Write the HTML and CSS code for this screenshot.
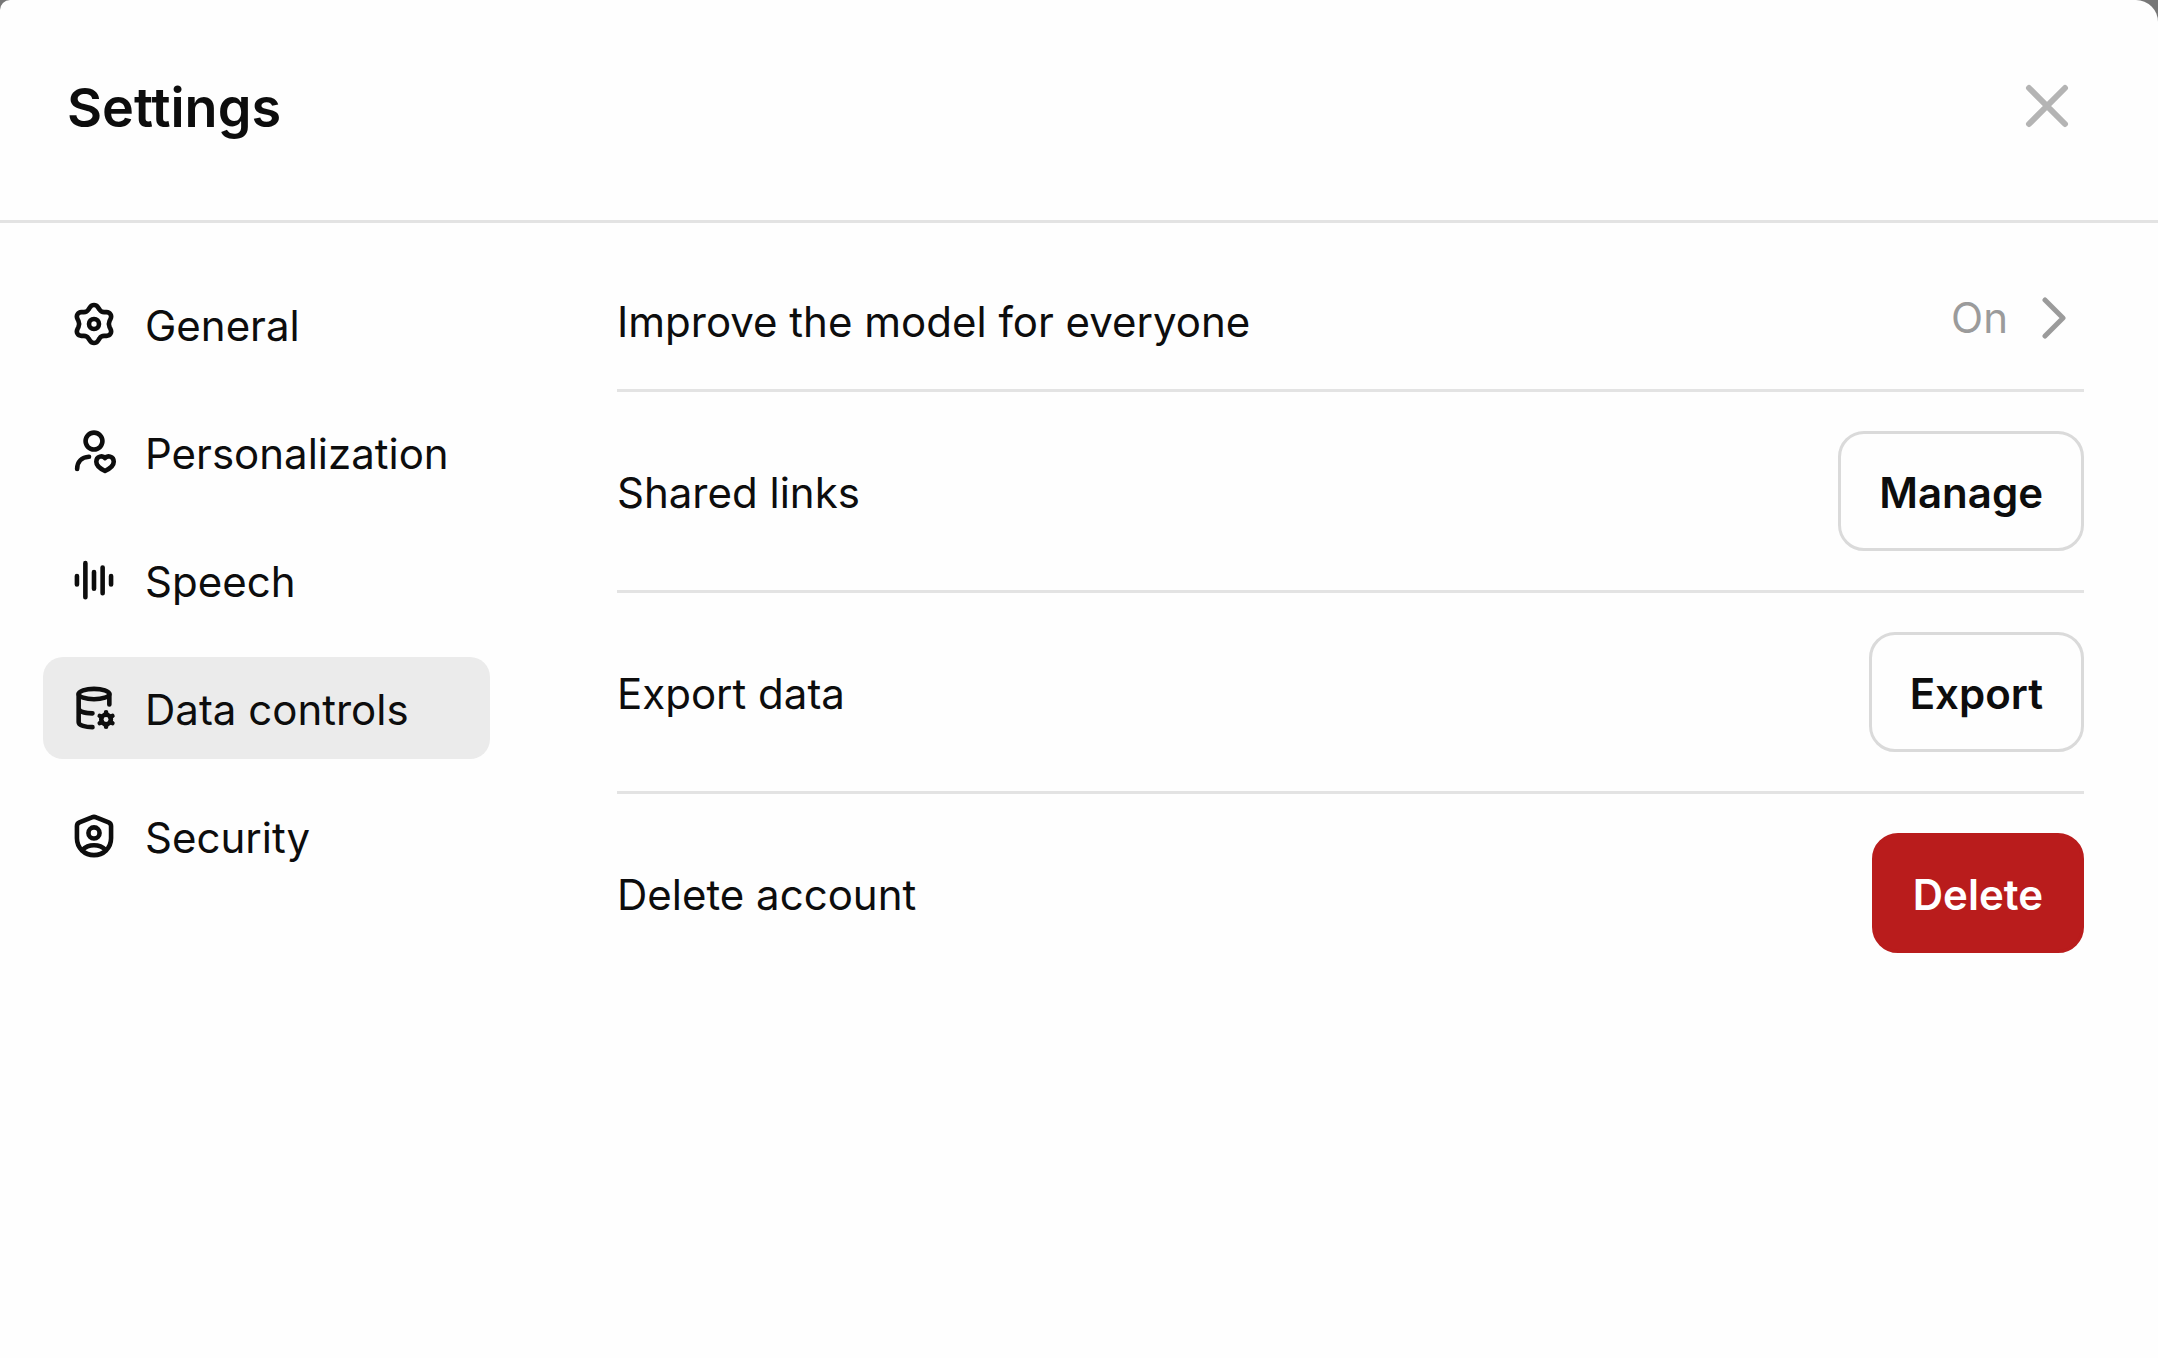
FILE: index.html
```
<!DOCTYPE html>
<html lang="en">
<head>
  <meta charset="UTF-8" />
  <meta name="viewport" content="width=device-width, initial-scale=1.0" />
  <title>Settings</title>
  <link rel="stylesheet" href="styles.css">
</head>
<body>
  <div class="modal" role="dialog" aria-labelledby="title">
    <header class="header">
      <h1 class="title" id="title">Settings</h1>
      <button class="close" aria-label="Close">
        <svg class="icon" viewBox="0 0 46 46"><path d="M5 5L41 41M41 5L5 41" /></svg>
      </button>
    </header>

    <div class="content">
      <nav class="sidebar">
        <button class="tab">
          <svg class="icon" viewBox="0 0 24 24">
            <path d="M9.9 3.3C11 1.7 13 1.7 14.1 3.3L14.9 4.5C15.5 5.5 16.1 5.8 17.3 5.8L18.5 5.8C20.5 5.9 21.5 7.6 20.6 9.4L20.1 10.4C19.6 11.5 19.6 12.5 20.1 13.6L20.6 14.6C21.5 16.4 20.5 18.1 18.5 18.2L17.3 18.2C16.1 18.2 15.5 18.5 14.9 19.5L14.1 20.7C13 22.3 11 22.3 9.9 20.7L9.1 19.5C8.5 18.5 7.9 18.2 6.7 18.2L5.5 18.2C3.5 18.1 2.5 16.4 3.4 14.6L3.9 13.6C4.4 12.5 4.4 11.5 3.9 10.4L3.4 9.4C2.5 7.6 3.5 5.9 5.5 5.8L6.7 5.8C7.9 5.8 8.5 5.5 9.1 4.5Z" />
            <circle cx="12" cy="12" r="2.6" />
          </svg>
          <span class="label">General</span>
        </button>
        <button class="tab">
          <svg class="icon" viewBox="0 0 24 24">
            <circle cx="12" cy="6.3" r="4.4" />
            <path d="M9.4 14.5C5.6 14.7 3.2 17 3.2 20.9" />
            <path d="M17.75 15.2C16.6 13.7 13.2 14 13.2 17.1C13.2 19.2 15.4 20.8 17.75 21.9C20.1 20.8 22.3 19.2 22.3 17.1C22.3 14 18.9 13.7 17.75 15.2Z" />
          </svg>
          <span class="label">Personalization</span>
        </button>
        <button class="tab">
          <svg class="icon" viewBox="0 0 24 24">
            <path d="M3.1 9.9V14.3M7.5 3.2V21M12 7.8V16.6M16.5 5.5V18.9M20.9 9.9V14.3" />
          </svg>
          <span class="label">Speech</span>
        </button>
        <button class="tab active">
          <svg class="icon" viewBox="0 0 24 24">
            <ellipse cx="12" cy="4.7" rx="8" ry="2.7" />
            <path d="M4 4.7V19.4C4 21 7.6 22 11.2 22M4 12.4C4.4 14 7.8 14.8 11.2 14.8M20 4.7V10.2" />
            <circle cx="18.3" cy="18" r="2.5" />
            <path d="M18.3 15.4V14.2M18.3 20.6V21.8M20.6 16.7L21.6 16.1M16 19.3L15 19.9M20.6 19.3L21.6 19.9M16 16.7L15 16.1" />
          </svg>
          <span class="label">Data controls</span>
        </button>
        <button class="tab">
          <svg class="icon" viewBox="0 0 24 24">
            <path d="M10.9 2.3Q12 1.8 13.1 2.3L19.6 4.9Q20.9 5.5 20.9 6.8V13.2C20.9 18.4 16.8 22 12 22S3.1 18.4 3.1 13.2V6.8Q3.1 5.5 4.4 4.9Z" />
            <circle cx="12" cy="10.4" r="2.9" />
            <path d="M6 19.2C7.5 17.6 9.6 16.8 12 16.8S16.5 17.6 18 19.2" />
          </svg>
          <span class="label">Security</span>
        </button>
      </nav>

      <main class="panel">
        <div class="row">
          <span class="label">Improve the model for everyone</span>
          <button class="value">
            On
            <svg class="chevron" viewBox="0 0 24 46"><path d="M3 5L21 23L3 41" /></svg>
          </button>
        </div>
        <div class="row">
          <span class="label">Shared links</span>
          <button class="btn">Manage</button>
        </div>
        <div class="row">
          <span class="label">Export data</span>
          <button class="btn">Export</button>
        </div>
        <div class="row">
          <span class="label">Delete account</span>
          <button class="btn btn-danger">Delete</button>
        </div>
      </main>
    </div>
  </div>
</body>
</html>
```
FILE: styles.css
```
* {
  margin: 0;
  padding: 0;
  box-sizing: border-box;
}

body {
  font-family: Inter, "Liberation Sans", sans-serif;
  font-size: 42px;
  line-height: 56px;
  color: #0d0d0d;
  background: #777;
}

button {
  font: inherit;
  color: inherit;
  background: none;
  border: none;
  cursor: pointer;
}

.modal {
  min-height: 100vh;
  background: #fefefe;
  border-radius: 10px 22px 0 0;
}

.header {
  display: flex;
  justify-content: space-between;
  align-items: center;
  padding: 70px 88px 78px 67px;
  border-bottom: 3px solid #e3e3e3;
}

.title {
  padding-top: 4px;
  font-size: 54px;
  font-weight: 600;
  line-height: 68px;
}

.close {
  display: flex;
  color: #b4b4b4;
}

.icon {
  flex: none;
  width: 46px;
  height: 46px;
  fill: none;
  stroke: currentColor;
  stroke-width: 2.4;
  stroke-linecap: round;
  stroke-linejoin: round;
}

.close .icon {
  stroke-width: 6;
}

.content {
  display: flex;
  gap: 127px;
  padding: 28px 74px 0 43px;
}

.sidebar {
  display: flex;
  flex-direction: column;
  flex: none;
  gap: 26px;
  width: 447px;
  padding-top: 22px;
}

.tab {
  display: flex;
  align-items: center;
  gap: 28px;
  height: 102px;
  padding: 0 28px;
  border-radius: 20px;
  text-align: left;
}

.tab.active {
  background: #ebebeb;
}

.label {
  padding-top: 4px;
}

.panel {
  flex: 1;
}

.row {
  display: flex;
  justify-content: space-between;
  align-items: center;
  padding: 39px 0;
  border-bottom: 3px solid #e3e3e3;
}

.row:last-child {
  border-bottom: none;
}

.value {
  display: flex;
  align-items: center;
  gap: 34px;
  padding-right: 18px;
  padding-bottom: 4px;
  color: #9b9b9b;
}

.chevron {
  width: 24px;
  height: 46px;
  fill: none;
  stroke: currentColor;
  stroke-width: 5;
  stroke-linecap: round;
  stroke-linejoin: round;
}

.btn {
  height: 120px;
  padding: 4px 38px 0;
  border: 3px solid #dadada;
  border-radius: 26px;
  font-weight: 600;
}

.btn-danger {
  color: #fff;
  background: #b91c1c;
  border-color: #b91c1c;
}
```
